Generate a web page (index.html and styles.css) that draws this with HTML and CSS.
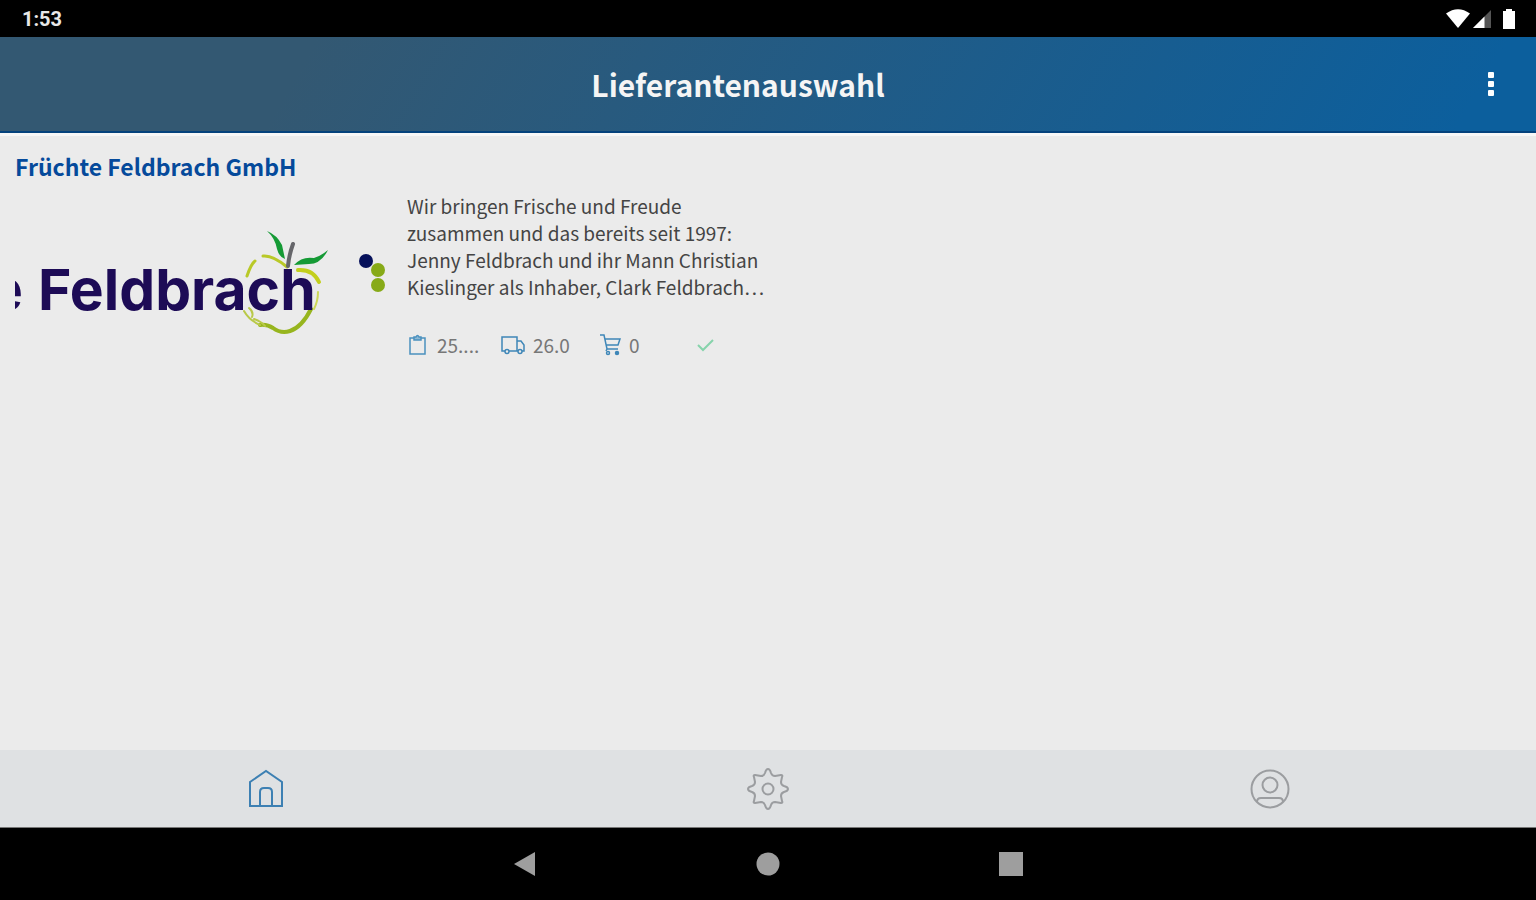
FILE: index.html
```html
<!DOCTYPE html>
<html lang="de">
<head>
  <meta charset="UTF-8">
  <title>Lieferantenauswahl</title>
  <meta name="viewport" content="width=device-width, initial-scale=1.0">
  <link rel="stylesheet" href="styles.css">
</head>
<body>
<div class="status-bar">
  <span class="clock">1:53</span>
  <div class="status-icons">
    <svg width="24" height="20" viewBox="0 0 24 20"><path d="M0 4.500Q12-4 24 4.500L12 19Z" fill="#fff"/></svg>
    <svg width="20" height="20" viewBox="0 0 20 20"><path d="M19 1V19H1Z" fill="#555"/><path d="M12.500 7.500V19H1Z" fill="#fff"/></svg>
    <svg class="battery" width="14" height="22" viewBox="0 0 14 22"><path d="M4 1H10V3H13V21H1V3H4Z" fill="#fff"/></svg>
  </div>
</div>

<header class="app-bar">
  <h1>Lieferantenauswahl</h1>
  <button class="menu-btn" type="button" aria-label="Menü">
    <svg width="8" height="26" viewBox="0 0 8 26" fill="#fff"><rect x="1" y="1" width="6" height="6" rx="1"/><rect x="1" y="10" width="6" height="6" rx="1"/><rect x="1" y="19" width="6" height="6" rx="1"/></svg>
  </button>
</header>

<main class="suppliers">
  <article class="supplier">
    <h2>Früchte Feldbrach GmbH</h2>
    <div class="supplier-body">
      <svg class="logo" viewBox="0 -18 370 170" role="img" aria-label="Früchte Feldbrach">
        <g fill="none" stroke-linecap="round">
          <path d="M232 66Q236 54 240 51M248 46Q258 45 272 57" stroke="#b9c928" stroke-width="3"/>
          <path d="M283 60Q298 59 304 72" stroke="#c3cf1c" stroke-width="4"/>
          <path d="M303 82Q303 91 299 99" stroke="#cdd75a" stroke-width="2"/>
          <path d="M296 99Q287 117 275 121Q266 124 258 118Q252 114 245 115" stroke="#97b51e" stroke-width="4"/>
          <path d="M245 115Q234 110 229 101M234 98Q239 102 237 107M239 109Q247 112 250 116" stroke="#b9c948" stroke-width="2"/>
          <path d="M273 56Q274 45 278 34" stroke="#66666a" stroke-width="4"/>
        </g>
        <path d="M252 21Q262 25 267 35L270 49Q264 47 262 39Q260 28 252 21Z" fill="#159a35"/>
        <path d="M279 55Q287 46 299 48Q306 46 313 40Q306 54 294 54Z" fill="#159a35"/>
        <text x="-26" y="100" class="logo-text">e</text>
        <text x="23" y="100" class="logo-text">Feldbrach</text>
        <circle cx="351" cy="51" r="7" fill="#06105a"/>
        <circle cx="363" cy="60" r="7" fill="#87aa18"/>
        <circle cx="363" cy="75" r="7" fill="#87aa18"/>
      </svg>
      <div class="supplier-info">
        <p>Wir bringen Frische und Freude zusammen und das bereits seit 1997: Jenny Feldbrach und ihr Mann Christian Kieslinger als Inhaber, Clark Feldbrach…</p>
        <ul class="stats">
          <li>
            <svg width="24" height="24" viewBox="0 0 24 24" fill="none" stroke="#4b91bf" stroke-width="1.500"><path d="M9 5H5V21H20V5H16"/><path d="M9 7V4H11Q12.500 1 14 4H16V7Z" fill="#8db8d4"/></svg>
            <span>25....</span>
          </li>
          <li>
            <svg width="24" height="24" viewBox="0 0 24 24" fill="none" stroke="#3f87b8" stroke-width="1.500"><path d="M4 18H1V4H16V18H8M16 8H20L23 12V18H21M16 18H17"/><circle cx="6" cy="18.500" r="2"/><circle cx="19" cy="18.500" r="2"/></svg>
            <span>26.0</span>
          </li>
          <li>
            <svg width="24" height="24" viewBox="0 0 24 24" fill="none" stroke="#3f87b8" stroke-width="1.500"><path d="M3 2H7L10 16H21M8 6H23L21 12H9M10 16L9 18"/><circle cx="11" cy="20" r="1.500"/><circle cx="20" cy="20" r="1.500" fill="#3f87b8"/></svg>
            <span>0</span>
          </li>
          <li>
            <svg width="24" height="24" viewBox="0 0 24 24" fill="none" stroke="#86d3ab" stroke-width="2"><path d="M5 12L10 17L20 7"/></svg>
          </li>
        </ul>
      </div>
    </div>
  </article>
</main>

<nav class="tab-bar">
  <a href="#" class="active" aria-label="Start">
    <svg width="42" height="42" viewBox="0 0 42 42"><path d="M5 14L21 3L37 14V38H5Z"/><path d="M15 38V24Q15 20 19 20H23Q27 20 27 24V38"/></svg>
  </a>
  <a href="#" aria-label="Einstellungen">
    <svg width="42" height="42" viewBox="0 0 42 42" stroke-linejoin="round"><path d="M21 1Q23 1 24 5Q25 8 28 8L34 7Q36 7 35 9L34 14Q34 17 37 18Q41 19 41 21Q41 23 37 24Q34 25 34 28L35 33Q36 35 34 35L28 34Q25 34 24 37Q23 41 21 41Q19 41 18 37Q17 34 14 34L8 35Q6 35 7 33L8 28Q8 25 5 24Q1 23 1 21Q1 19 5 18Q8 17 8 14L7 9Q6 7 8 7L14 8Q17 8 18 5Q19 1 21 1Z"/><circle cx="21" cy="21" r="5.500"/></svg>
  </a>
  <a href="#" aria-label="Profil">
    <svg width="42" height="42" viewBox="0 0 42 42"><circle cx="21" cy="21" r="18.500"/><circle cx="21" cy="17" r="7.500"/><path d="M8 34Q8 30 12 30H30Q34 30 34 34"/></svg>
  </a>
</nav>

<div class="system-nav">
  <button type="button" aria-label="Zurück"><svg width="24" height="26" viewBox="0 0 24 26"><path d="M22 1V25L1 13Z"/></svg></button>
  <button type="button" aria-label="Home"><svg width="24" height="26" viewBox="0 0 24 26"><circle cx="12" cy="13" r="11.500"/></svg></button>
  <button type="button" aria-label="Übersicht"><svg width="24" height="26" viewBox="0 0 24 26"><path d="M0 1H24V25H0Z"/></svg></button>
</div>
</body>
</html>
```

FILE: styles.css
```css
* { box-sizing: border-box; }
body { margin: 0; min-height: 100vh; display: flex; flex-direction: column; background: #ebebeb; font-family: "Noto Sans CJK SC", "Noto Sans", sans-serif; }
h1, h2, p, ul { margin: 0; padding: 0; }
svg { display: block; flex: none; }
button { padding: 0; border: 0; background: none; }

.status-bar { display: flex; justify-content: space-between; align-items: center; height: 37px; padding: 0 20px 0 22px; background: #000; color: #e8e8e8; }
.clock { font-family: Roboto, sans-serif; font-size: 20px; font-weight: 700; }
.status-icons { display: flex; align-items: center; gap: 2px; }
.battery { margin-left: 8px; }

.app-bar { display: flex; align-items: center; height: 96px; background: linear-gradient(120deg, #335872 20%, #0c5f9d 95%); border-bottom: 2px solid #04427c; color: #f5f5f5; }
.app-bar h1 { flex: 1; font-size: 30px; line-height: 40px; font-weight: 700; text-align: center; }
.menu-btn { width: 60px; padding-left: 11px; }

.suppliers { flex: 1; display: grid; grid-template-columns: 1fr 1fr; align-items: start; padding: 16px 15px; border-top: 3px solid #f7f7f7; }
.supplier h2 { color: #054a9b; font-size: 23px; line-height: 28px; font-weight: 700; }
.supplier-body { display: flex; gap: 20px; margin-top: 12px; }
.logo { width: 370px; height: 170px; }
.logo-text { font-family: Inter, sans-serif; font-size: 57px; font-weight: 700; fill: #1d0b56; }
.supplier-info { flex: 1; }
.supplier-info p { max-width: 366px; padding-left: 2px; color: #444; font-size: 19px; line-height: 27px; }
.stats { display: grid; grid-template-columns: repeat(4, 96px); margin-top: 32px; list-style: none; }
.stats li { display: flex; align-items: center; gap: 8px; color: #777; font-size: 19px; line-height: 26px; }

.tab-bar { display: flex; height: 77px; padding: 0 15px; background: #dfe1e3; }
.tab-bar a { flex: 1; display: flex; justify-content: center; align-items: center; }
.tab-bar svg { fill: none; stroke: #9b9da0; stroke-width: 2; }
.tab-bar .active svg { stroke: #3d80b3; }

.system-nav { display: flex; justify-content: center; align-items: center; gap: 219px; height: 73px; border-top: 1px solid #777; background: #000; }
.system-nav svg { fill: #9e9e9e; }
```
